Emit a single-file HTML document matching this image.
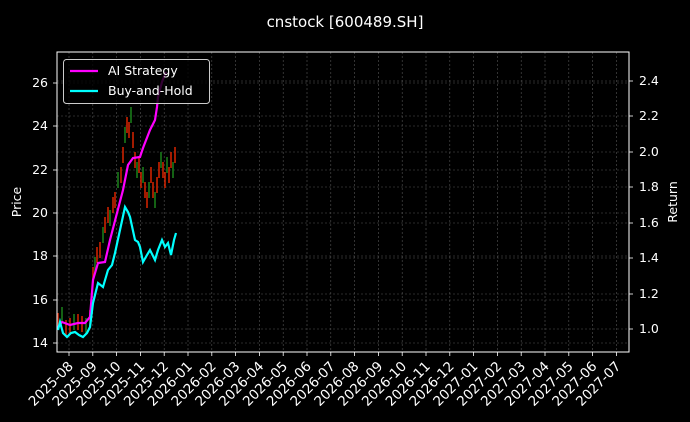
<!DOCTYPE html>
<html><head><meta charset="utf-8"><style>
html,body{margin:0;padding:0;background:#000;}
svg{display:block;font-family:"DejaVu Sans","Liberation Sans",sans-serif;}
</style></head><body>
<svg width="690" height="422" viewBox="0 0 690 422" xmlns="http://www.w3.org/2000/svg">
<rect width="690" height="422" fill="#000"/>
<text x="345" y="27" fill="#fff" font-size="15" text-anchor="middle">cnstock [600489.SH]</text>
<g stroke="#555" stroke-width="0.6" stroke-dasharray="2,2">
<line x1="57" x2="629" y1="343" y2="343"/><line x1="57" x2="629" y1="300" y2="300"/><line x1="57" x2="629" y1="256" y2="256"/><line x1="57" x2="629" y1="213" y2="213"/><line x1="57" x2="629" y1="170" y2="170"/><line x1="57" x2="629" y1="126" y2="126"/><line x1="57" x2="629" y1="83" y2="83"/>
<line x1="57" x2="629" y1="329" y2="329"/><line x1="57" x2="629" y1="294" y2="294"/><line x1="57" x2="629" y1="258" y2="258"/><line x1="57" x2="629" y1="223" y2="223"/><line x1="57" x2="629" y1="187" y2="187"/><line x1="57" x2="629" y1="152" y2="152"/><line x1="57" x2="629" y1="116" y2="116"/><line x1="57" x2="629" y1="81" y2="81"/>
</g>
<g id="vgrid" stroke="#555" stroke-width="0.6" stroke-dasharray="2,2"></g>
<g stroke-width="1.6" id="candles"></g>
<polyline fill="none" stroke="#ff00ff" stroke-width="2.2" points="58,327 62,322 70,325 78,323 85,323 90,317 93,280 98,263 105,262 110,240 117,213 123,190 128,165 133,158 140,157 143,148 150,130 155,120 157,107 158,97 162,82 166,72"/>
<polyline fill="none" stroke="#00ffff" stroke-width="2.2" points="58,330 60,322 63,333 67,337 71,333 75,332 79,335 83,337 87,333 90,327 93,303 98,283 103,287 108,270 112,265 115,253 120,230 125,207 128,212 130,217 135,240 138,242 140,247 143,262 147,255 150,250 153,256 155,260 158,250 162,240 165,247 168,243 171,255 174,240 176,233"/>
<rect x="57" y="52" width="572" height="300" fill="none" stroke="#fff" stroke-width="1"/>
<g id="ticks" stroke="#fff" stroke-width="0.8"></g>
<g fill="#fff" font-size="12.5" text-anchor="end">
<text x="48" y="347">14</text><text x="48" y="304">16</text><text x="48" y="260">18</text><text x="48" y="217">20</text><text x="48" y="174">22</text><text x="48" y="130">24</text><text x="48" y="87">26</text>
</g>
<g fill="#fff" font-size="12.5">
<text x="639" y="333">1.0</text><text x="639" y="298">1.2</text><text x="639" y="262">1.4</text><text x="639" y="227">1.6</text><text x="639" y="191">1.8</text><text x="639" y="156">2.0</text><text x="639" y="120">2.2</text><text x="639" y="85">2.4</text>
</g>
<text transform="translate(21,202) rotate(-90)" fill="#fff" font-size="12.5" text-anchor="middle">Price</text>
<text transform="translate(677,202) rotate(-90)" fill="#fff" font-size="12.5" text-anchor="middle">Return</text>
<g id="xl" fill="#fff" font-size="13.5" text-anchor="end"></g>
<rect x="63.5" y="59.5" width="146" height="44" rx="3" fill="#000" fill-opacity="0.8" stroke="#ccc" stroke-width="1"/>
<line x1="70" x2="98" y1="71" y2="71" stroke="#ff00ff" stroke-width="2.2"/>
<line x1="70" x2="98" y1="91" y2="91" stroke="#00ffff" stroke-width="2.2"/>
<text x="108" y="75" fill="#fff" font-size="12.5">AI Strategy</text>
<text x="108" y="95" fill="#fff" font-size="12.5">Buy-and-Hold</text>
</svg>
<script>
var ns="http://www.w3.org/2000/svg";
var labels=["2025-08","2025-09","2025-10","2025-11","2025-12","2026-01","2026-02","2026-03","2026-04","2026-05","2026-06","2026-07","2026-08","2026-09","2026-10","2026-11","2026-12","2027-01","2027-02","2027-03","2027-04","2027-05","2027-06","2027-07"];
var vg=document.getElementById("vgrid"),tk=document.getElementById("ticks"),xl=document.getElementById("xl");
labels.forEach(function(l,i){
 var x=69+i*23.8;
 var g=document.createElementNS(ns,"line");g.setAttribute("x1",x);g.setAttribute("x2",x);g.setAttribute("y1",52);g.setAttribute("y2",352);vg.appendChild(g);
 var t=document.createElementNS(ns,"line");t.setAttribute("x1",x);t.setAttribute("x2",x);t.setAttribute("y1",352);t.setAttribute("y2",356);tk.appendChild(t);
 var tx=document.createElementNS(ns,"text");tx.setAttribute("transform","translate("+(x+5)+",367) rotate(-45)");tx.textContent=l;xl.appendChild(tx);
});
[343,300,256,213,170,126,83].forEach(function(y){var t=document.createElementNS(ns,"line");t.setAttribute("x1",53);t.setAttribute("x2",57);t.setAttribute("y1",y);t.setAttribute("y2",y);tk.appendChild(t);});
[329,294,258,223,187,152,116,81].forEach(function(y){var t=document.createElementNS(ns,"line");t.setAttribute("x1",629);t.setAttribute("x2",633);t.setAttribute("y1",y);t.setAttribute("y2",y);tk.appendChild(t);});
var c=document.getElementById("candles");
var pts=[[58,321],[62,315],[66,328],[70,326],[74,322],[78,322],[82,324],[86,326],[90,318],[93,275],[95,265],[97,255],[100,250],[103,235],[105,225],[108,215],[110,218],[113,205],[115,200],[118,180],[121,175],[123,155],[125,135],[127,125],[129,130],[131,115],[133,140],[135,160],[137,170],[139,165],[141,180],[143,175],[145,190],[147,200],[149,190],[151,175],[153,190],[155,200],[157,185],[159,170],[161,160],[163,170],[165,180],[167,165],[169,175],[171,160],[173,170],[175,155]];
pts.forEach(function(p,i){
 var l=document.createElementNS(ns,"line");l.setAttribute("x1",p[0]);l.setAttribute("x2",p[0]);
 l.setAttribute("y1",p[1]-8);l.setAttribute("y2",p[1]+8);
 l.setAttribute("stroke",i%3==1?"#1a7a1a":"#cc2200");c.appendChild(l);
});
</script>
</body></html>
